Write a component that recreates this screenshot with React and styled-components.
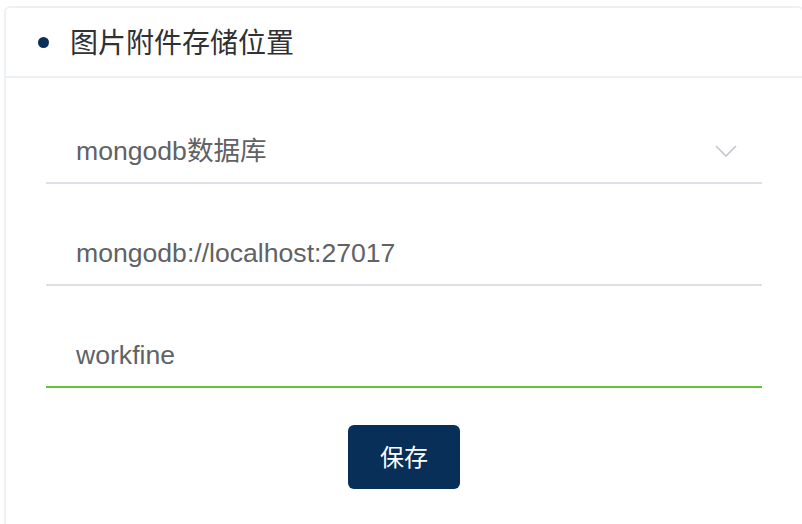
import React from "react";
import styled, { createGlobalStyle } from "styled-components";

const Global = createGlobalStyle`
  html, body { margin: 0; padding: 0; background: #ffffff; }
  body { font-family: "Liberation Sans", "Noto Sans CJK SC", sans-serif; }
  * { box-sizing: border-box; }
`;

const Card = styled.div`
  margin: 6px 0 0 4px;
  width: 800px;
  height: 540px;
  border: 2px solid #edf0f5;
  border-radius: 6px;
  background: #fff;
`;

const Header = styled.div`
  height: 70px;
  display: flex;
  align-items: center;
  padding-left: 32px;
  border-bottom: 2px solid #edf0f5;
  gap: 21px;
`;

const Dot = styled.span`
  width: 11px;
  height: 11px;
  border-radius: 50%;
  background: #0a3059;
  flex: none;
`;

const Title = styled.span`
  font-size: 28px;
  color: #303133;
  font-family: "Noto Sans CJK SC", sans-serif;
  line-height: 1;
  margin-top: -2px;
`;

const Body = styled.div`
  padding: 42px 0 0 40px;
  width: 756px;
  display: flex;
  flex-direction: column;
`;

const Field = styled.div`
  height: 64px;
  display: flex;
  align-items: center;
  padding: 0 25px 0 30px;
  border-bottom: 2px solid ${(p) => (p.$active ? "#67c23a" : "#dcdfe6")};
  margin-bottom: 38px;
  font-size: 26.6px;
  color: #606266;
`;

const Value = styled.span`
  flex: 1;
  font-family: "Liberation Sans", "Noto Sans CJK SC", sans-serif;
  line-height: 1;
`;

const Actions = styled.div`
  display: flex;
  justify-content: center;
  margin-top: -1px;
`;

const Button = styled.button`
  width: 112px;
  height: 64px;
  border: none;
  border-radius: 6px;
  background: #072f57;
  color: #fff;
  font-size: 24px;
  font-family: "Noto Sans CJK SC", sans-serif;
  padding: 0 0 3px;
  cursor: pointer;
`;

const Chevron = () => (
  <svg width="22" height="12" viewBox="0 0 22 12" fill="none">
    <path d="M1 1 L11 11 L21 1" stroke="#c0c4cc" strokeWidth="1.6" />
  </svg>
);

export default function App() {
  return (
    <>
      <Global />
      <Card>
        <Header>
          <Dot />
          <Title>图片附件存储位置</Title>
        </Header>
        <Body>
          <Field>
            <Value>mongodb数据库</Value>
            <Chevron />
          </Field>
          <Field>
            <Value>mongodb://localhost:27017</Value>
          </Field>
          <Field $active>
            <Value>workfine</Value>
          </Field>
          <Actions>
            <Button>保存</Button>
          </Actions>
        </Body>
      </Card>
    </>
  );
}
